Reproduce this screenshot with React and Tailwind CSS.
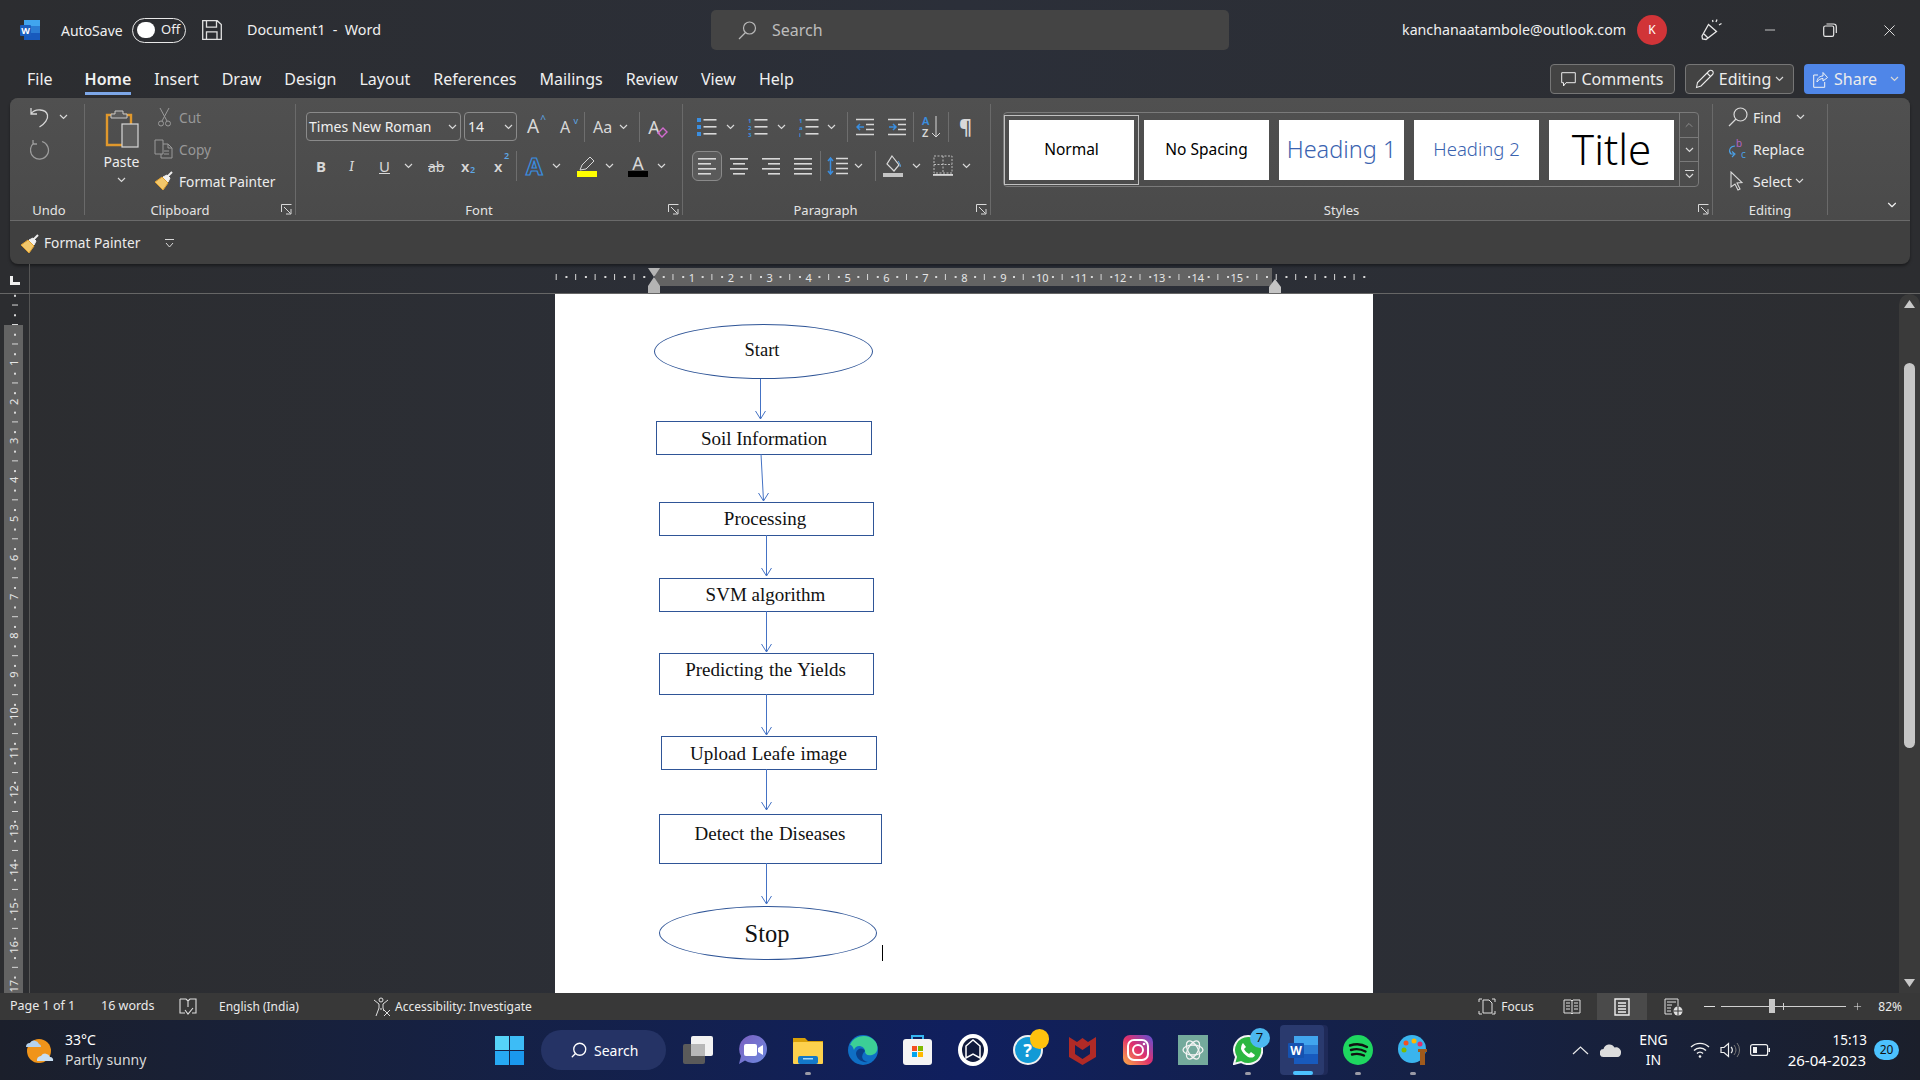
import React from 'react'
import { Search, Minus, Plus, X, ChevronUp, ChevronDown } from 'lucide-react'

function Chev({ className = '' }) {
  return (
    <svg width="9" height="6" viewBox="0 0 9 6" className={`shrink-0 ${className}`}>
      <path d="M1 1l3.5 3.5L8 1" fill="none" stroke="#d8d8d8" strokeWidth="1.2" />
    </svg>
  )
}

function Launcher() {
  return (
    <svg width="11" height="11" viewBox="0 0 11 11" className="absolute right-[3px] bottom-0">
      <path d="M.5 8V.5H10.5" fill="none" stroke="#d8d8d8" />
      <path d="M3 3l6.5 6.5M10 5v5H5" fill="none" stroke="#d8d8d8" />
    </svg>
  )
}

function Sep({ className = '' }) {
  return <div className={`w-px h-[30px] bg-[#6e6e6e] shrink-0 ${className}`}></div>
}

function Lines({ rows = 4, widths = [18, 18, 18, 18], align = 'left', w = 18 }) {
  return (
    <svg width={w} height="20" viewBox={`0 0 ${w} 20`} className="shrink-0">
      {widths.slice(0, rows).map((lw, i) => {
        const x = align === 'center' ? (w - lw) / 2 : align === 'right' ? w - lw : 0
        return <rect key={i} x={x} y={2 + i * 5} width={lw} height="1.6" fill="#d8d8d8" />
      })}
    </svg>
  )
}

function Group({ className, labelClass = '', label, launcher, children }) {
  return (
    <div className={`relative mt-[6px] h-[111px] shrink-0 border-r border-[#6a6a6a] ${className}`}>
      {children}
      <div className={`absolute left-0 right-0 bottom-[-4px] text-center text-[13px] leading-[18px] text-[#e4e4e4] ${labelClass}`}>{label}</div>
      {launcher && <Launcher />}
    </div>
  )
}

function TitleBar() {
  return (
    <div className="h-[62px] flex items-center pl-[20px] pb-[2px] shrink-0 text-[#f0f0f0] text-[14px]">
      <svg width="20" height="20" viewBox="0 0 20 20" className="shrink-0">
        <rect x="4" y="0" width="16" height="20" rx="1.5" fill="#2b7cd3" />
        <rect x="4" y="0" width="16" height="6" fill="#41a5ee" />
        <rect x="4" y="13" width="16" height="7" fill="#185abd" />
        <rect x="0" y="5" width="11" height="11" rx="1" fill="#1b5ebe" />
        <text x="5.5" y="14" textAnchor="middle" fontSize="9" fontWeight="700" fill="#fff" fontFamily="Noto Sans">W</text>
      </svg>
      <span className="ml-[21px] w-[71px] shrink-0">AutoSave</span>
      <div className="w-[54px] h-[25px] rounded-full border border-[#e8e8e8] flex items-center pl-[4px] shrink-0">
        <div className="w-[18px] h-[16px] rounded-full bg-white"></div>
        <span className="ml-[6px] text-[13px]">Off</span>
      </div>
      <svg width="20" height="20" viewBox="0 0 20 20" className="ml-[16px] shrink-0">
        <path d="M.7.7h14.5L19.3 4.5V19.3H.7z M4.5.7v6.5h10V.7 M4.5 19.3v-7.5h10.500v7.5" fill="none" stroke="#e0e0e0" strokeWidth="1.3" />
      </svg>
      <span className="ml-[25px] w-[140px] shrink-0 whitespace-pre text-[14.3px]">Document1  -  Word</span>
      <div className="ml-[324px] w-[518px] h-[40px] rounded-[5px] bg-[#444444] flex items-center pl-[27px] shrink-0">
        <svg width="19" height="19" viewBox="0 0 19 19">
          <circle cx="11.5" cy="7" r="6" fill="none" stroke="#b8b8b8" strokeWidth="1.2" />
          <path d="M7.5 11.5L1 18" stroke="#b8b8b8" strokeWidth="1.2" />
        </svg>
        <span className="ml-[15px] text-[#bdbdbd] text-[16px]">Search</span>
      </div>
      <span className="ml-auto text-[14.2px] shrink-0">kanchanaatambole@outlook.com</span>
      <div className="ml-[11px] w-[30px] h-[30px] rounded-full bg-[#d13438] flex items-center justify-center text-[12px] text-white shrink-0">K</div>
      <svg width="22" height="22" viewBox="0 0 22 22" className="ml-[33px] shrink-0">
        <path d="M2 17L8.5 5.5l8 7L6 20.5 2.5 20z M16 3l1-2.5M19 6l2.5-1.5M13 3l-.5-2M4 15l4 4" fill="none" stroke="#e8e8e8" strokeWidth="1.3" />
      </svg>
      <Minus size={16} strokeWidth={1.2} color="#e8e8e8" className="ml-[40px] shrink-0" />
      <svg width="14" height="14" viewBox="0 0 14 14" className="ml-[45px] shrink-0">
        <rect x=".7" y="3" width="10" height="10.3" rx="1.6" fill="none" stroke="#e8e8e8" strokeWidth="1.2" />
        <path d="M3.5 1h7a2.8 2.8 0 0 1 2.8 2.8V10" fill="none" stroke="#e8e8e8" strokeWidth="1.2" />
      </svg>
      <X size={19} strokeWidth={1.2} color="#e8e8e8" className="ml-[43px] mr-[21px] shrink-0" />
    </div>
  )
}

function TabsRow() {
  const tabs = ['File', 'Home', 'Insert', 'Draw', 'Design', 'Layout', 'References', 'Mailings', 'Review', 'View', 'Help']
  return (
    <div className="h-[36px] flex items-start pl-[27px] pr-[15px] shrink-0">
      <div className="flex gap-[23px] text-[16px] leading-[34px] text-[#f0f0f0]">
        {tabs.map((t) => (
          <div key={t} className={`relative ${t === 'Home' ? 'font-semibold ml-[9px]' : ''}`}>
            {t}
            {t === 'Home' && <div className="absolute left-0 right-0 top-[30px] h-[3px] bg-[#7da7e8]"></div>}
          </div>
        ))}
      </div>
      <div className="ml-auto flex gap-[10px] mt-[2px] text-[16px] text-[#ececec]">
        <div className="w-[125px] h-[30px] rounded-[4px] border border-[#767676] bg-[#434343] flex items-center justify-center gap-[5px]">
          <svg width="15" height="15" viewBox="0 0 15 15"><path d="M.7.7h13.6v10H5L2.5 14v-3.3H.7z" fill="none" stroke="#ececec" /></svg>
          Comments
        </div>
        <div className="w-[109px] h-[30px] rounded-[4px] border border-[#767676] bg-[#434343] flex items-center justify-center gap-[4px]">
          <svg width="20" height="20" viewBox="0 0 20 20"><path d="M1.5 18.5l1-5L14 2a2.2 2.2 0 0 1 3.5 3.5L6 17z M12 4l3.5 3.5" fill="none" stroke="#ececec" strokeWidth="1.1" /></svg>
          Editing
          <Chev />
        </div>
        <div className="w-[101px] h-[30px] rounded-[4px] bg-[#4f86e8] flex items-center pl-[9px] gap-[6px]">
          <svg width="15" height="17" viewBox="0 0 15 17"><path d="M5 4H.7v12.3h11V11 M4 11c0-4 3-6 6-6V1.500l4.500 5L10 10V7.500C7.500 7.500 5 9 4 11z" fill="none" stroke="#f4f4f4" /></svg>
          Share
          <Chev className="ml-[7px]" />
        </div>
      </div>
    </div>
  )
}

function UndoGroup() {
  return (
    <Group className="w-[75px]" labelClass="pl-[4px]" label="Undo">
      <div className="flex items-center pl-[20px] pt-[2px]">
        <svg width="20" height="22" viewBox="0 0 20 22" className="shrink-0">
          <path d="M1 2v6h6 M1 8C5 2 16 3 17.500 9c1 4-3 9-8 12" fill="none" stroke="#d6d6d6" strokeWidth="1.3" />
        </svg>
        <Chev className="ml-[9px]" />
      </div>
      <svg width="20" height="21" viewBox="0 0 20 21" className="ml-[20px] mt-[11px]">
        <path d="M12 2.500a9 9 0 1 1-8 1.500 M3 1v4h4" fill="none" stroke="#9c9c9c" strokeWidth="1.3" />
      </svg>
    </Group>
  )
}

function Brush({ size = 20 }) {
  return (
    <svg width={size} height={size} viewBox="0 0 20 20" className="shrink-0">
      <path d="M1 11l7-5 6 6-5 7z" fill="#f2c76b" stroke="#e0a030" />
      <path d="M9 6l4-2 3 3-2 4z" fill="#f0f0f0" stroke="#f0f0f0" />
      <path d="M14 5l4-4" stroke="#f0f0f0" strokeWidth="2" />
    </svg>
  )
}

function ClipboardGroup() {
  return (
    <Group className="w-[211px]" labelClass="pr-[20px]" label="Clipboard" launcher>
      <div className="flex">
        <div className="w-[68px] pl-[12px] pr-[7px] flex flex-col items-center shrink-0">
          <svg width="34" height="40" viewBox="0 0 34 40" className="mt-[4px] shrink-0">
            <path d="M2 7h24v30H2z" fill="none" stroke="#e0982c" strokeWidth="2.4" />
            <path d="M10 6V3h8v3h4v4H6V6z" fill="#5b5b5b" stroke="#c8c8c8" />
            <rect x="17" y="16" width="16" height="23" fill="#5e5e5e" stroke="#d8d8d8" strokeWidth="1.2" />
          </svg>
          <span className="mt-[4px] text-[14px] text-[#ececec] leading-[20px]">Paste</span>
          <Chev className="mt-[5px]" />
        </div>
        <div className="ml-[1px] pt-[2px] text-[13.7px] text-[#ececec] leading-[31px]">
          <div className="flex items-center h-[22px] text-[#989898]">
            <svg width="15" height="20" viewBox="0 0 15 20" className="ml-[3px]">
              <path d="M3 1l7 13 M12 1L5 14" stroke="#9a9a9a" /><circle cx="4" cy="16.500" r="2.500" fill="none" stroke="#9a9a9a" /><circle cx="11" cy="16.500" r="2.500" fill="none" stroke="#9a9a9a" />
            </svg>
            <span className="ml-[7px]">Cut</span>
          </div>
          <div className="flex items-center h-[22px] mt-[10px] text-[#989898]">
            <svg width="20" height="20" viewBox="0 0 20 20">
              <path d="M1 1h8v14H1z M9 5h5l4 4v10H7v-4 M14 5v4h4 M10 12h5M10 15h5" fill="none" stroke="#9a9a9a" />
            </svg>
            <span className="ml-[5px]">Copy</span>
          </div>
          <div className="flex items-center h-[22px] mt-[10px]">
            <Brush />
            <span className="ml-[5px]">Format Painter</span>
          </div>
        </div>
      </div>
    </Group>
  )
}

function FontGroup() {
  return (
    <Group className="w-[387px]" labelClass="pr-[20px]" label="Font" launcher>
      <div className="flex items-center pl-[10px] pt-[8px] h-[37px] text-[#d8d8d8]">
        <div className="w-[155px] h-[29px] rounded-[4px] border border-[#8a8a8a] flex items-center pl-[2px] pr-[3px] text-[14px] text-[#f0f0f0] shrink-0">
          <span className="whitespace-nowrap">Times New Roman</span>
          <Chev className="ml-auto" />
        </div>
        <div className="ml-[3px] w-[53px] h-[29px] rounded-[4px] border border-[#8a8a8a] flex items-center pl-[3px] pr-[3px] text-[14px] text-[#f0f0f0] shrink-0">
          14
          <Chev className="ml-auto" />
        </div>
        <div className="ml-[10px] w-[19px] relative text-[19px] leading-none shrink-0">A<span className="absolute right-0 top-[-3px] text-[10px] text-[#5ea7e6]">^</span></div>
        <div className="ml-[14px] w-[18px] relative text-[16px] leading-none shrink-0">A<span className="absolute right-0 top-[-3px] text-[9px] text-[#5ea7e6]">v</span></div>
        <Sep className="ml-[6px]" />
        <span className="ml-[8px] text-[16px] leading-none shrink-0">Aa</span>
        <Chev className="ml-[7px]" />
        <Sep className="ml-[11px]" />
        <div className="ml-[8px] relative w-[20px] text-[18px] leading-none shrink-0">
          A
          <svg width="11" height="11" viewBox="0 0 11 11" className="absolute right-0 bottom-[-2px]"><path d="M1 6l5-5 4 4-5 5z" fill="none" stroke="#d36bd0" strokeWidth="1.4" /></svg>
        </div>
      </div>
      <div className="flex items-center pt-[10px] h-[40px] text-[#d8d8d8] text-[15px]">
        <span className="ml-[20px] w-[12px] font-bold shrink-0">B</span>
        <span className="ml-[21px] w-[10px] italic font-serif shrink-0">I</span>
        <span className="ml-[20px] w-[12px] underline shrink-0">U</span>
        <Chev className="ml-[13px]" />
        <span className="ml-[15px] w-[19px] text-[14px] line-through shrink-0">ab</span>
        <span className="ml-[14px] w-[14px] font-semibold relative shrink-0">x<span className="absolute left-[9px] top-[8px] text-[9px] text-[#5ea7e6]">2</span></span>
        <span className="ml-[19px] w-[16px] font-semibold relative shrink-0">x<span className="absolute left-[10px] top-[-6px] text-[9px] text-[#5ea7e6]">2</span></span>
        <Sep className="ml-[6px]" />
        <span className="ml-[9px] w-[20px] text-[24px] leading-none font-bold text-transparent [-webkit-text-stroke:1.2px_#3a8ee0] shrink-0">A</span>
        <Chev className="ml-[6px]" />
        <div className="ml-[15px] w-[21px] flex flex-col items-center shrink-0">
          <svg width="17" height="15" viewBox="0 0 17 15"><path d="M2 14l2-5L12 1l4 4-8 8z" fill="none" stroke="#d8d8d8" /></svg>
          <div className="w-[20px] h-[6px] bg-[#ffff00]"></div>
        </div>
        <Chev className="ml-[8px]" />
        <div className="ml-[14px] w-[20px] flex flex-col items-center shrink-0">
          <span className="text-[18px] leading-[15px]">A</span>
          <div className="w-[20px] h-[6px] bg-black"></div>
        </div>
        <Chev className="ml-[9px]" />
      </div>
    </Group>
  )
}

function ListIcon({ colors, marks }) {
  return (
    <svg width="20" height="20" viewBox="0 0 20 20" className="shrink-0">
      {[3, 10, 17].map((y, i) => (
        <g key={y}>
          {marks ? <text x="0" y={y + 2.5} fontSize="6" fontWeight="700" fill={colors} fontFamily="Noto Sans">{marks[i]}</text> : <rect x="0" y={y - 2} width="4" height="4" fill={colors} />}
          <rect x="6.500" y={y - 1} width="13" height="1.600" fill="#d8d8d8" />
        </g>
      ))}
    </svg>
  )
}

function ParagraphGroup() {
  return (
    <Group className="w-[308px]" labelClass="pr-[22px]" label="Paragraph" launcher>
      <div className="flex items-center pl-[14px] pt-[8px] h-[37px]">
        <ListIcon colors="#3a8ee0" />
        <Chev className="ml-[9px]" />
        <div className="ml-[13px]"><ListIcon colors="#3a8ee0" marks={['1', '2', '3']} /></div>
        <Chev className="ml-[9px]" />
        <div className="ml-[13px]"><ListIcon colors="#3a8ee0" marks={['1', 'a', 'i']} /></div>
        <Chev className="ml-[8px]" />
        <Sep className="ml-[11px]" />
        <svg width="18" height="20" viewBox="0 0 18 20" className="ml-[8px] shrink-0">
          <path d="M0 2.500h18M10 7.500h8M10 12.500h8M0 17.500h18" stroke="#d8d8d8" strokeWidth="1.500" /><path d="M8 10H1M4 7l-3 3 3 3" fill="none" stroke="#3a8ee0" strokeWidth="1.500" />
        </svg>
        <svg width="18" height="20" viewBox="0 0 18 20" className="ml-[14px] shrink-0">
          <path d="M0 2.500h18M10 7.500h8M10 12.500h8M0 17.500h18" stroke="#d8d8d8" strokeWidth="1.500" /><path d="M1 10h7M5 7l3 3-3 3" fill="none" stroke="#3a8ee0" strokeWidth="1.500" />
        </svg>
        <Sep className="ml-[7px]" />
        <div className="ml-[8px] flex items-center w-[22px] shrink-0">
          <div className="flex flex-col text-[11px] leading-[12px] font-semibold">
            <span className="text-[#3a8ee0]">A</span><span className="text-[#d8d8d8]">Z</span>
          </div>
          <svg width="10" height="22" viewBox="0 0 10 22" className="ml-[2px]"><path d="M5 0v21M1 17l4 4 4-4" fill="none" stroke="#d8d8d8" /></svg>
        </div>
        <Sep className="ml-[4px]" />
        <span className="ml-[10px] text-[20px] leading-none font-bold text-[#d8d8d8]">¶</span>
      </div>
      <div className="flex items-center pl-[9px] pt-[10px] h-[40px]">
        <div className="w-[30px] h-[30px] rounded-[6px] border border-[#8a8a8a] bg-[#5a5a5a] flex items-center justify-center shrink-0">
          <Lines widths={[18, 13, 18, 13]} />
        </div>
        <div className="ml-[8px]"><Lines widths={[18, 12, 18, 12]} align="center" /></div>
        <div className="ml-[14px]"><Lines widths={[18, 12, 18, 12]} align="right" /></div>
        <div className="ml-[14px]"><Lines /></div>
        <Sep className="ml-[8px]" />
        <svg width="21" height="22" viewBox="0 0 21 22" className="ml-[6px] shrink-0">
          <path d="M3.500 3v16M1 6l2.500-3L6 6M1 16l2.500 3L6 16" fill="none" stroke="#3a8ee0" strokeWidth="1.500" /><path d="M9 3.500h12M9 8.500h12M9 13.500h12M9 18.500h12" stroke="#d8d8d8" strokeWidth="1.500" />
        </svg>
        <Chev className="ml-[6px]" />
        <Sep className="ml-[12px]" />
        <svg width="20" height="22" viewBox="0 0 20 22" className="ml-[7px] shrink-0">
          <path d="M9 1l7 9-5 6-7-7z" fill="none" stroke="#d8d8d8" strokeWidth="1.200" /><path d="M15 6c2 3 3 5 2 6" stroke="#5ea7e6" fill="none" /><rect x="0" y="18" width="20" height="4" fill="#c4c4c4" />
        </svg>
        <Chev className="ml-[9px]" />
        <svg width="20" height="22" viewBox="0 0 20 22" className="ml-[12px] shrink-0">
          <path d="M1 1h18v17H1zM10 1v17M1 9.500h18" fill="none" stroke="#bcbcbc" strokeDasharray="2 1.500" /><rect x="0" y="19" width="20" height="1.800" fill="#d8d8d8" />
        </svg>
        <Chev className="ml-[9px]" />
      </div>
    </Group>
  )
}

function StyleCard({ selected, className, children }) {
  return (
    <div className={`w-[125px] h-[60px] bg-white shrink-0 flex items-center justify-center ${selected ? 'outline outline-[#c0c0c0] outline-offset-[4px]' : ''} ${className}`}>
      {children}
    </div>
  )
}

function StylesGroup() {
  return (
    <Group className="w-[722px]" labelClass="pr-[20px]" label="Styles" launcher>
      <div className="ml-[12px] mt-[8px] w-[696px] h-[75px] rounded-[4px] border border-[#7a7a7a] flex items-center pl-[5px]">
        <div className="flex gap-[10px]">
          <StyleCard selected className="text-[15.500px] text-black">Normal</StyleCard>
          <StyleCard className="text-[15.500px] text-black">No Spacing</StyleCard>
          <StyleCard className="text-[23.500px] font-light text-[#3a63b0]">Heading 1</StyleCard>
          <StyleCard className="text-[18.500px] font-light text-[#3a63b0] pb-[1px]">Heading 2</StyleCard>
          <StyleCard className="text-[42px] font-light text-black pb-[2px]">Title</StyleCard>
        </div>
        <div className="ml-auto w-[19px] h-full border-l border-[#7a7a7a] flex flex-col shrink-0">
          <div className="h-[25px] border-b border-[#7a7a7a] flex items-center justify-center"><ChevronUp size={12} color="#8c8c8c" /></div>
          <div className="h-[24px] border-b border-[#7a7a7a] flex items-center justify-center"><Chev /></div>
          <div className="flex-1 flex flex-col items-center justify-center">
            <div className="w-[9px] h-px bg-[#d8d8d8] mb-[2px]"></div>
            <Chev />
          </div>
        </div>
      </div>
    </Group>
  )
}

function EditingGroup() {
  return (
    <Group className="w-[115px]" label="Editing">
      <div className="pl-[15px] pt-[3px] text-[14px] text-[#ececec]">
        <div className="flex items-center h-[20px]">
          <svg width="20" height="20" viewBox="0 0 20 20" className="shrink-0"><circle cx="12.500" cy="7.500" r="6.500" fill="none" stroke="#d8d8d8" strokeWidth="1.200" /><path d="M8 12l-7 7" stroke="#d8d8d8" strokeWidth="1.200" /></svg>
          <span className="ml-[5px]">Find</span>
          <Chev className="ml-[15px]" />
        </div>
        <div className="flex items-center h-[20px] mt-[12px]">
          <svg width="20" height="20" viewBox="0 0 20 20" className="shrink-0 overflow-visible">
            <text x="8" y="8" fontSize="10" fill="#b565c4" fontFamily="Noto Sans">b</text>
            <text x="13" y="19" fontSize="10" fill="#4aa0e6" fontFamily="Noto Sans">c</text>
            <path d="M7 7C2 7 0 12 3 15l3 0M4 12.500L7 15l-3 3" fill="none" stroke="#4aa0e6" strokeWidth="1.100" />
          </svg>
          <span className="ml-[5px]">Replace</span>
        </div>
        <div className="flex items-center h-[20px] mt-[12px]">
          <svg width="20" height="20" viewBox="0 0 20 20" className="shrink-0"><path d="M3 1v15l4-3 3 6 2-1-3-6 5-.5z" fill="none" stroke="#d8d8d8" strokeWidth="1.100" /></svg>
          <span className="ml-[5px]">Select</span>
          <Chev className="ml-[3px]" />
        </div>
      </div>
    </Group>
  )
}

function Ribbon() {
  return (
    <div className="ml-[10px] w-[1900px] h-[166px] rounded-lg overflow-hidden shrink-0 flex flex-col bg-[#404040] shadow-[0_2px_3px_rgba(0,0,0,0.4)]">
      <div className="h-[123px] border-b border-[#6a6a6a] bg-gradient-to-b from-[#505050] to-[#4a4a4a] flex shrink-0">
        <UndoGroup />
        <ClipboardGroup />
        <FontGroup />
        <ParagraphGroup />
        <StylesGroup />
        <EditingGroup />
        <div className="ml-auto mr-[11px] mt-[100px]"><ChevronDown size={14} color="#f0f0f0" /></div>
      </div>
      <div className="flex-1 flex items-center pl-[10px] pt-[2px] text-[13.7px] text-[#ececec]">
        <Brush />
        <span className="ml-[4px]">Format Painter</span>
        <svg width="9" height="10" viewBox="0 0 9 10" className="ml-[25px]"><path d="M0 .5h9M1 4l3.500 4L8 4" fill="none" stroke="#d8d8d8" /></svg>
      </div>
    </div>
  )
}

function HRuler() {
  const ticks = []
  for (let i = -10; i <= 73; i++) {
    const x = 98 + i * 9.73
    if (i % 4 === 0) {
      if (i > 0 && i <= 60) ticks.push(<text key={i} x={x} y="16.500" fontSize="11" textAnchor="middle" fill="#e6e6e6" fontFamily="Noto Sans">{i / 4}</text>)
      else if (i !== 0) ticks.push(<rect key={i} x={x} y="9" width="1" height="6" fill="#d8d8d8" />)
    } else if (i % 2 === 0) ticks.push(<rect key={i} x={x} y="9" width="1" height="6" fill="#d8d8d8" />)
    else ticks.push(<rect key={i} x={x} y="11" width="2" height="2" fill="#d8d8d8" />)
  }
  return (
    <svg width="818" height="28" viewBox="0 0 818 28" className="ml-[525px] mt-[1px] shrink-0">
      <rect x="100" y="3" width="617" height="18" fill="#636363" />
      {ticks}
      <path d="M93 3h12l-6 9zM93 21l6-9 6 9zM93 21h12v7H93z" fill="#b4b4b4" />
      <path d="M714 22l6-8 6 8zM714 22h12v6h-12z" fill="#c4c4c4" />
    </svg>
  )
}

function RulerRow() {
  return (
    <div className="h-[30px] flex shrink-0 border-b border-[#666666]">
      <div className="w-[30px] border-r border-[#555555] flex items-start justify-center pt-[12px] shrink-0">
        <svg width="10" height="9" viewBox="0 0 10 9"><path d="M0 0h3v6h7v3H0z" fill="#f0f0f0" /></svg>
      </div>
      <HRuler />
    </div>
  )
}

function VRuler() {
  const marks = []
  for (let i = -3; i <= 69; i++) {
    const y = 30 + i * 9.74
    if (i % 4 === 0 && i > 0) marks.push(<text key={i} x="15" y={y} fontSize="11" textAnchor="middle" dominantBaseline="middle" fill="#e6e6e6" fontFamily="Noto Sans" transform={`rotate(-90 15 ${y})`}>{i / 4}</text>)
    else if (i % 2 === 0) marks.push(<rect key={i} x="12" y={y} width="6" height="1" fill="#d8d8d8" />)
    else marks.push(<rect key={i} x="14" y={y} width="2" height="2" fill="#d8d8d8" />)
  }
  return (
    <div className="w-[30px] h-full border-r border-[#555555] shrink-0">
      <svg width="29" height="699" viewBox="0 0 29 699">
        <rect x="4" y="31" width="19" height="668" fill="#636363" />
        {marks}
      </svg>
    </div>
  )
}

function Node({ className, oval, textClass = 'text-[19px]', children }) {
  return (
    <div className={`absolute border-[1.3px] border-[#2f5597] flex justify-center text-[#111] ${oval ? 'rounded-[50%]' : ''} ${className}`}>
      <span className={textClass}>{children}</span>
    </div>
  )
}

function Page() {
  const arrows = [
    [205.500, 85, 205.500, 125],
    [206, 160, 208.500, 207],
    [211.500, 241, 211.500, 282],
    [211.500, 317, 211.500, 358],
    [211.500, 400, 211.500, 441],
    [211.500, 475, 211.500, 516],
    [211.500, 569, 211.500, 610],
  ]
  return (
    <div className="relative w-[818px] h-full bg-white shrink-0 overflow-hidden font-['Liberation_Serif',serif]">
      <Node oval className="left-[99px] top-[30px] w-[219px] h-[55px] items-center" textClass="text-[18.500px] -mt-[2px] -ml-[3px]">Start</Node>
      <Node className="left-[101px] top-[127px] w-[216px] h-[34px] items-center" textClass="text-[19px] mt-[2px]">Soil Information</Node>
      <Node className="left-[104px] top-[208px] w-[215px] h-[34px] items-center" textClass="text-[19px] -ml-[3px]">Processing</Node>
      <Node className="left-[104px] top-[284px] w-[215px] h-[34px] items-center" textClass="text-[19px] -ml-[2px]">SVM algorithm</Node>
      <Node className="left-[104px] top-[359px] w-[215px] h-[42px] items-start" textClass="text-[19px] leading-[30px] mt-[1px] -ml-[2px] [word-spacing:1px]">Predicting the Yields</Node>
      <Node className="left-[106px] top-[442px] w-[216px] h-[34px] items-center" textClass="text-[19px] mt-[2px] -ml-[1px] [word-spacing:1px]">Upload Leafe image</Node>
      <Node className="left-[104px] top-[520px] w-[223px] h-[50px] items-start" textClass="text-[19px] leading-[36px] mt-[1px] -ml-[1px] [word-spacing:1px]">Detect the Diseases</Node>
      <Node oval className="left-[104px] top-[612px] w-[218px] h-[54px] items-center" textClass="text-[24.500px] mt-[3px] -ml-[2px]">Stop</Node>
      <div className="absolute left-[327px] top-[651px] w-px h-[16px] bg-black"></div>
      <svg width="818" height="699" viewBox="0 0 818 699" className="absolute left-0 top-0 pointer-events-none">
        {arrows.map(([x1, y1, x2, y2]) => (
          <g key={y1} fill="none" stroke="#4472c4" strokeWidth="1">
            <path d={`M${x1} ${y1}L${x2} ${y2}`} />
            <path d={`M${x2 - 5} ${y2 - 8}L${x2} ${y2}L${x2 + 5} ${y2 - 8}`} />
          </g>
        ))}
      </svg>
    </div>
  )
}

function Scrollbar() {
  return (
    <div className="w-[21px] h-full bg-[#3a3a3a] rounded-t-full flex flex-col items-center shrink-0">
      <svg width="11" height="8" viewBox="0 0 11 8" className="mt-[6px] shrink-0"><path d="M5.500 0L11 8H0z" fill="#c8c8c8" /></svg>
      <div className="mt-[55px] w-[11px] h-[385px] rounded-full bg-[#c6c6c6] shrink-0"></div>
      <svg width="11" height="8" viewBox="0 0 11 8" className="mt-auto mb-[6px] shrink-0"><path d="M5.500 8L11 0H0z" fill="#c8c8c8" /></svg>
    </div>
  )
}

function DocArea() {
  return (
    <div className="h-[699px] flex shrink-0">
      <VRuler />
      <div className="w-[525px] shrink-0"></div>
      <Page />
      <div className="flex-1"></div>
      <Scrollbar />
    </div>
  )
}

function StatusBar() {
  return (
    <div className="h-[27px] bg-[#383838] flex items-center pl-[10px] text-[12px] text-[#eaeaea] shrink-0">
      <span className="w-[91px] text-[12.500px] shrink-0">Page 1 of 1</span>
      <span className="w-[78px] text-[12.500px] shrink-0">16 words</span>
      <svg width="18" height="18" viewBox="0 0 18 18" className="shrink-0"><path d="M1 1h6l2 2 2-2h6v14h-4 M1 1v14h5 M9 3v6 M6 12l3 4 5-6" fill="none" stroke="#e0e0e0" strokeWidth="1.100" /></svg>
      <span className="ml-[22px] w-[154px] shrink-0">English (India)</span>
      <svg width="18" height="20" viewBox="0 0 18 20" className="shrink-0">
        <circle cx="8" cy="3" r="2" fill="none" stroke="#e0e0e0" /><path d="M1 3l5 4v4L3 19M15 3L10 7v4l1 3M8 11v2" fill="none" stroke="#e0e0e0" /><path d="M11 13l6 6M17 13l-6 6" stroke="#e0e0e0" />
      </svg>
      <span className="ml-[4px]">Accessibility: Investigate</span>
      <svg width="18" height="17" viewBox="0 0 18 17" className="ml-auto shrink-0"><path d="M1 4V1h3M14 1h3v3M17 13v3h-3M4 16H1v-3" fill="none" stroke="#e0e0e0" /><path d="M5 2h6l3 3v10H5z" fill="none" stroke="#e0e0e0" /></svg>
      <span className="ml-[5px] w-[62px] shrink-0">Focus</span>
      <svg width="18" height="16" viewBox="0 0 18 16" className="shrink-0"><path d="M1 1h7l1 1 1-1h7v13h-7l-1 1-1-1H1zM9 2v13M3 4h4M3 7h4M3 10h4M11 4h4M11 7h4M11 10h4" fill="none" stroke="#e0e0e0" /></svg>
      <div className="ml-[16px] w-[50px] h-full bg-[#4a4a4a] flex items-center justify-center shrink-0">
        <svg width="16" height="18" viewBox="0 0 16 18"><path d="M1 1h14v16H1z" fill="none" stroke="#f0f0f0" strokeWidth="1.400" /><path d="M4 5h8M4 8h8M4 11h8M4 14h8" stroke="#f0f0f0" strokeWidth="1.300" /></svg>
      </div>
      <svg width="19" height="18" viewBox="0 0 19 18" className="ml-[17px] shrink-0"><path d="M1 1h13v7M1 1v15h7M3 4h9M3 7h5M3 10h4M3 13h4" fill="none" stroke="#e0e0e0" /><circle cx="14" cy="13" r="4.500" fill="#e0e0e0" /><path d="M9.500 13h9M14 8.500v9" stroke="#383838" /></svg>
      <div className="ml-[21px] w-[11px] h-px bg-[#e0e0e0] shrink-0"></div>
      <div className="ml-[6px] w-[125px] h-px bg-[#d0d0d0] relative shrink-0">
        <div className="absolute left-[48px] top-[-7px] w-[6px] h-[14px] bg-[#c8c8c8]"></div>
        <div className="absolute left-[62px] top-[-3px] w-px h-[7px] bg-[#d0d0d0]"></div>
      </div>
      <Plus size={11} strokeWidth={1.300} color="#e0e0e0" className="ml-[6px] shrink-0" />
      <span className="ml-[15px] mr-[18px] shrink-0">82%</span>
    </div>
  )
}

function Slot({ className = '', dot, children }) {
  return (
    <div className={`relative w-[55px] h-[60px] flex items-center justify-center shrink-0 ${className}`}>
      {children}
      {dot && <div className="absolute left-1/2 -translate-x-1/2 bottom-[5px] w-[6px] h-[3px] rounded-full bg-[#9a9aa6]"></div>}
    </div>
  )
}

function TaskIcons() {
  return (
    <div className="ml-[4px] flex shrink-0">
      <Slot>
        <svg width="30" height="28" viewBox="0 0 30 28">
          <rect x="0" y="8" width="22" height="20" rx="2" fill="#5a5a5a" />
          <rect x="8" y="0" width="22" height="20" rx="2" fill="#f2f2f2" />
          <rect x="8" y="8" width="14" height="12" fill="#b8b8b8" />
        </svg>
      </Slot>
      <Slot>
        <svg width="30" height="30" viewBox="0 0 30 30">
          <defs><linearGradient id="meet" x1="0" y1="0" x2="1" y2="1"><stop offset="0" stopColor="#7b5fc0" /><stop offset="1" stopColor="#6d8ae0" /></linearGradient></defs>
          <path d="M15 0a14 14 0 1 1-8 25.500L1 29l2-8A14 14 0 0 1 15 0z" fill="url(#meet)" />
          <rect x="6" y="9" width="13" height="12" rx="2" fill="#fff" /><path d="M20 13l5-3v10l-5-3z" fill="#fff" />
        </svg>
      </Slot>
      <Slot dot>
        <svg width="30" height="28" viewBox="0 0 30 28">
          <path d="M0 2h12l3 3h15v6H0z" fill="#d9a008" />
          <rect x="0" y="6" width="30" height="22" rx="1" fill="#fdd14d" />
          <rect x="5" y="20" width="20" height="8" rx="2" fill="#1479c9" /><rect x="10" y="22" width="10" height="1.500" fill="#a8d8f8" />
        </svg>
      </Slot>
      <Slot>
        <svg width="30" height="30" viewBox="0 0 30 30">
          <circle cx="15" cy="15" r="15" fill="#0f6fc5" />
          <path d="M2 10C6 0 20-2 27 6c4 5 3 13-3 14-5 1-7-1-7-4 0-5-9-8-11-1C4 9 2 10 2 10z" fill="#3ccf96" />
          <path d="M17 16c-2-4-8-3-9 2 0 5 5 10 12 9-6-1-8-6-3-11z" fill="#0a3f8a" />
        </svg>
      </Slot>
      <Slot>
        <svg width="29" height="30" viewBox="0 0 29 30">
          <path d="M9 5V1h11v4" fill="none" stroke="#35b6f2" strokeWidth="2" />
          <rect x="0" y="4" width="29" height="26" rx="3" fill="#f4f4f4" />
          <rect x="9" y="11" width="5" height="5" fill="#f25022" /><rect x="15" y="11" width="5" height="5" fill="#7fba00" /><rect x="9" y="17" width="5" height="5" fill="#00a4ef" /><rect x="15" y="17" width="5" height="5" fill="#ffb900" />
        </svg>
      </Slot>
      <Slot>
        <svg width="30" height="32" viewBox="0 0 30 32">
          <ellipse cx="15" cy="16" rx="13" ry="14" fill="#101a3c" stroke="#fff" strokeWidth="4" />
          <path d="M8 24V12l7-6 7 6v12l-7-4z" fill="none" stroke="#fff" strokeWidth="1.500" />
        </svg>
      </Slot>
      <Slot>
        <div className="relative w-[30px] h-[30px]">
          <div className="w-[30px] h-[30px] rounded-full bg-[#129ad6] border-2 border-[#f0f0f0] flex items-center justify-center text-white font-bold text-[18px]">?</div>
          <div className="absolute right-[-6px] top-[-6px] w-[19px] h-[20px] rounded-full bg-[#ffc20e]"></div>
        </div>
      </Slot>
      <Slot>
        <svg width="27" height="30" viewBox="0 0 27 30"><path d="M0 2l8 5 5.500-4L19 7l8-5v20L13.500 30 0 22z M6 10v9l7.500 5L21 19v-9l-7.500 5z" fill="#b02a26" fillRule="evenodd" /></svg>
      </Slot>
      <Slot>
        <svg width="30" height="30" viewBox="0 0 30 30">
          <defs><linearGradient id="insta" x1="0" y1="1" x2="1" y2="0"><stop offset="0" stopColor="#fcb045" /><stop offset=".5" stopColor="#e1306c" /><stop offset="1" stopColor="#5b51d8" /></linearGradient></defs>
          <rect width="30" height="30" rx="7" fill="url(#insta)" />
          <rect x="5" y="5" width="20" height="20" rx="6" fill="none" stroke="#fff" strokeWidth="2" /><circle cx="15" cy="15" r="5" fill="none" stroke="#fff" strokeWidth="2" /><circle cx="21" cy="9" r="1.300" fill="#fff" />
        </svg>
      </Slot>
      <Slot>
        <svg width="30" height="30" viewBox="0 0 30 30">
          <rect width="30" height="30" fill="#74aa9c" />
          <g fill="none" stroke="#f2f2f2" strokeWidth="1.300">
            <ellipse cx="15" cy="15" rx="10" ry="5" /><ellipse cx="15" cy="15" rx="10" ry="5" transform="rotate(60 15 15)" /><ellipse cx="15" cy="15" rx="10" ry="5" transform="rotate(120 15 15)" />
          </g>
        </svg>
      </Slot>
      <Slot dot>
        <div className="relative w-[30px] h-[30px]">
          <svg width="30" height="30" viewBox="0 0 30 30">
            <path d="M15 1a14 14 0 1 1-7 26L1 29l2-7A14 14 0 0 1 15 1z" fill="#2bb741" stroke="#f4f4f4" strokeWidth="2" />
            <path d="M10 8l3 4-2 2c1 2 3 4 5 5l2-2 4 3c-1 3-4 3-7 2-3-2-6-5-7-8 0-3 1-5 2-6z" fill="#fff" />
          </svg>
          <div className="absolute right-[-7px] top-[-7px] w-[20px] h-[20px] rounded-full bg-[#4cb8f0] flex items-center justify-center text-[13px] text-[#111]">7</div>
        </div>
      </Slot>
      <div className="relative w-[55px] h-[60px] flex items-center justify-center shrink-0">
        <div className="absolute left-[5px] top-[5px] w-[44px] h-[50px] rounded-[4px] bg-[#2a3a6e] shadow-[4px_0_0_#1f2a58]"></div>
        <svg width="30" height="30" viewBox="0 0 30 30" className="relative">
          <rect x="6" y="1" width="24" height="28" rx="1.500" fill="#2b7cd3" />
          <rect x="6" y="1" width="24" height="9" fill="#41a5ee" />
          <rect x="6" y="19" width="24" height="10" fill="#185abd" />
          <rect x="0" y="8" width="16" height="15" rx="1" fill="#1552b0" />
          <text x="8" y="20" textAnchor="middle" fontSize="12" fontWeight="700" fill="#fff" fontFamily="Noto Sans">W</text>
        </svg>
        <div className="absolute left-1/2 -translate-x-1/2 bottom-[5px] w-[20px] h-[4px] rounded-full bg-[#4cc2ff]"></div>
      </div>
      <Slot dot>
        <svg width="30" height="30" viewBox="0 0 30 30">
          <circle cx="15" cy="15" r="15" fill="#1ed760" />
          <path d="M7 10.500c6-2 12-1.500 17 1.500M8 15c5-1.500 10-1 14.500 1.500M9 19.500c4-1 8-1 12 1" fill="none" stroke="#111" strokeWidth="2.400" strokeLinecap="round" />
        </svg>
      </Slot>
      <Slot dot>
        <svg width="30" height="30" viewBox="0 0 30 30">
          <circle cx="14" cy="14" r="14" fill="#3ab4ee" />
          <circle cx="8" cy="8" r="2.500" fill="#f25022" /><circle cx="16" cy="6" r="2.500" fill="#ffb900" /><circle cx="6" cy="15" r="2.500" fill="#7fba00" /><circle cx="22" cy="9" r="2.500" fill="#e1306c" />
          <path d="M20 14h9v3h-2v13h-5V17h-2z" fill="#a05a1c" />
        </svg>
      </Slot>
    </div>
  )
}

function Taskbar() {
  return (
    <div className="h-[60px] flex items-center shrink-0 text-white bg-gradient-to-r from-[#1b1f2b] via-[#101f5e] to-[#1b1f2b]">
      <div className="w-[495px] pl-[25px] flex items-center shrink-0">
        <svg width="30" height="28" viewBox="0 0 30 28" className="shrink-0">
          <circle cx="14" cy="15" r="12" fill="#f0941a" />
          <path d="M1 11a4 4 0 0 1 4-4 5 5 0 0 1 9 1 3 3 0 0 1 2 3z" fill="#b4d2ee" />
          <path d="M12 25a4 4 0 0 1 4-5 5 5 0 0 1 9 1 3 3 0 0 1 3 4z" fill="#c8def2" />
        </svg>
        <div className="ml-[10px] text-[14px] leading-[20px]">
          <div>33°C</div>
          <div className="text-[#d8d8d8]">Partly sunny</div>
        </div>
      </div>
      <div className="w-[29px] h-[29px] grid grid-cols-2 gap-[1px] shrink-0">
        <div className="bg-[#56d3f8]"></div><div className="bg-[#3dbcf6]"></div>
        <div className="bg-[#27a9f3]"></div><div className="bg-[#1a98ee]"></div>
      </div>
      <div className="ml-[17px] w-[125px] h-[40px] rounded-full bg-[#253365] flex items-center pl-[29px] shrink-0">
        <Search size={18} strokeWidth={1.800} color="#fff" className="-scale-x-100" />
        <span className="ml-[6px] text-[14px]">Search</span>
      </div>
      <TaskIcons />
      <svg width="17" height="9" viewBox="0 0 17 9" className="ml-[132px] shrink-0"><path d="M1 8l7.500-7L16 8" fill="none" stroke="#e8e8e8" strokeWidth="1.200" /></svg>
      <svg width="21" height="13" viewBox="0 0 21 13" className="ml-[11px] shrink-0"><path d="M4 13a4 4 0 0 1-.5-8 6 6 0 0 1 11-1.500A5 5 0 0 1 21 9c0 2-1.500 4-3.500 4z" fill="#dcdcdc" /></svg>
      <div className="ml-[17px] w-[31px] text-center text-[14px] leading-[20px] shrink-0">ENG<br />IN</div>
      <svg width="20" height="16" viewBox="0 0 20 16" className="ml-[21px] shrink-0"><path d="M1 5a13 13 0 0 1 18 0M4 8.500a8.500 8.500 0 0 1 12 0M7 11.500a4 4 0 0 1 6 0" fill="none" stroke="#f0f0f0" strokeWidth="1.400" /><circle cx="10" cy="14.500" r="1.300" fill="#f0f0f0" /></svg>
      <svg width="21" height="16" viewBox="0 0 21 16" className="ml-[10px] shrink-0"><path d="M1 5.500h3L8.500 1.500v13L4 10.500H1z M11 5a4 4 0 0 1 0 6" fill="none" stroke="#f0f0f0" strokeWidth="1.200" /><path d="M14 3a8 8 0 0 1 0 10M17 1a11 11 0 0 1 0 14" fill="none" stroke="#777" /></svg>
      <svg width="20" height="12" viewBox="0 0 20 12" className="ml-[9px] shrink-0"><rect x=".6" y=".6" width="17" height="10.800" rx="2" fill="none" stroke="#f0f0f0" strokeWidth="1.200" /><rect x="3" y="3" width="4" height="6" fill="#f0f0f0" /><rect x="18.500" y="4" width="1.500" height="4" fill="#f0f0f0" /></svg>
      <div className="ml-[15px] w-[81px] text-right text-[14px] leading-[20px] shrink-0">
        <div className="text-[13.500px] -mr-px">15:13</div>
        <div className="whitespace-nowrap text-[15px]">26-04-2023</div>
      </div>
      <div className="ml-[8px] w-[25px] h-[20px] rounded-full bg-[#4cc2ff] flex items-center justify-center text-[12px] text-[#111] shrink-0">20</div>
    </div>
  )
}

export default function App() {
  return (
    <div className="w-[1920px] h-[1080px] overflow-hidden flex flex-col bg-gradient-to-r from-[#2c2d30] via-[#2b2f39] to-[#2c2d30] font-['Noto_Sans',sans-serif]">
      <TitleBar />
      <TabsRow />
      <Ribbon />
      <RulerRow />
      <DocArea />
      <StatusBar />
      <Taskbar />
    </div>
  )
}
